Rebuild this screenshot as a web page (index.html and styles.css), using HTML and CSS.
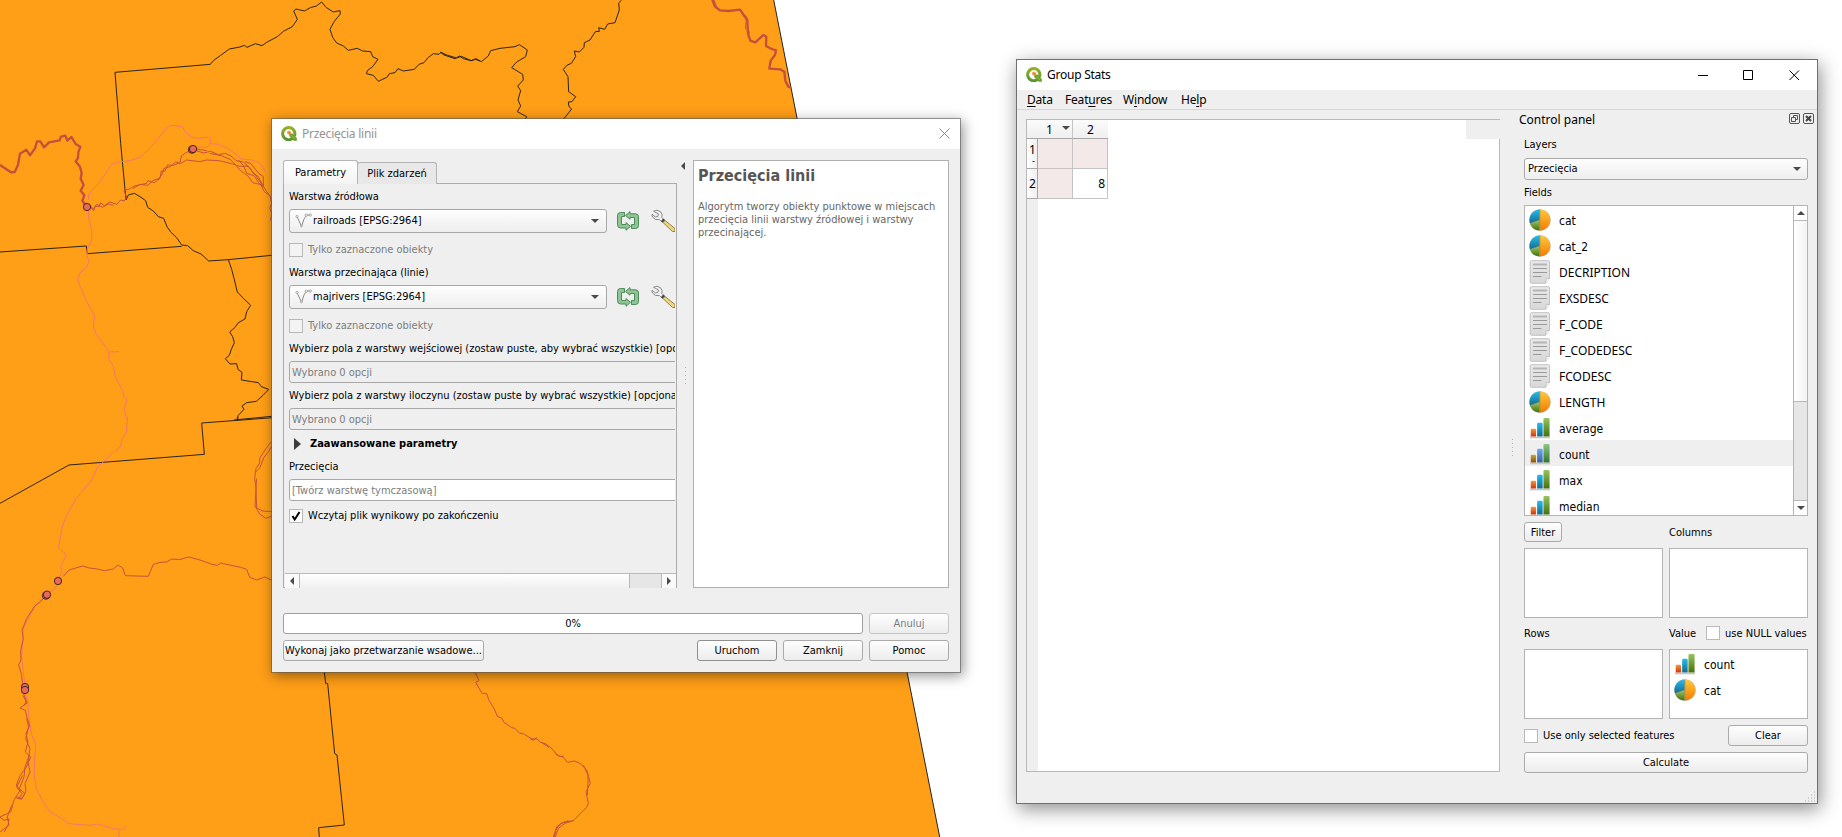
FILE: index.html
```html
<!DOCTYPE html>
<html lang="pl">
<head>
<meta charset="utf-8">
<title>QGIS</title>
<link rel="stylesheet" href="styles.css">
</head>
<body>
<svg class="defs" width="0" height="0" aria-hidden="true">
  <defs>
    <linearGradient id="gOrange" x1="0" y1="0" x2="0" y2="1"><stop offset="0" stop-color="#ffc83c"/><stop offset="1" stop-color="#f57c00"/></linearGradient>
    <linearGradient id="gBlue" x1="0" y1="0" x2="0" y2="1"><stop offset="0" stop-color="#25bdf0"/><stop offset="1" stop-color="#146a8c"/></linearGradient>
    <linearGradient id="gGreen" x1="0" y1="0" x2="0" y2="1"><stop offset="0" stop-color="#97c560"/><stop offset="1" stop-color="#45700d"/></linearGradient>
    <linearGradient id="gRed" x1="0" y1="0" x2="0" y2="1"><stop offset="0" stop-color="#f59a3c"/><stop offset="1" stop-color="#cc3311"/></linearGradient>
    <linearGradient id="gPage" x1="0" y1="0" x2="0" y2="1"><stop offset="0" stop-color="#e9e9e9"/><stop offset="1" stop-color="#d8d8d8"/></linearGradient>
    <linearGradient id="gLogo" x1="0" y1="0" x2="0" y2="1"><stop offset="0" stop-color="#93b023"/><stop offset="1" stop-color="#589632"/></linearGradient>
    <symbol id="logo" viewBox="0 0 16 16">
      <path d="M11.6 13.4A6.1 6.1 0 1 1 13.4 11" fill="none" stroke="url(#gLogo)" stroke-width="3"/>
      <path d="M8.2 8.4h3.2l4.4 4.6v2.8h-3L8.2 11z" fill="#6a9f2d"/>
      <path d="M10 9.8l4 4" stroke="#a9cc5c" stroke-width=".8"/>
      <circle cx="8" cy="7.6" r="2.1" fill="#f5a35a"/><circle cx="8.4" cy="8" r="1" fill="#ee7913"/>
    </symbol>
    <symbol id="pie" viewBox="0 0 22 22">
      <circle cx="11" cy="11" r="10.8" fill="#c9c4b4"/>
      <path d="M10.6 11V.6A10.4 10.4 0 0 0 1 14.4z" fill="url(#gBlue)"/>
      <path d="M10.6 11.4L1.2 14.9A10.4 10.4 0 0 0 10.6 21.4z" fill="url(#gGreen)"/>
      <path d="M11 .6a10.4 10.4 0 0 1 0 20.8z" fill="url(#gOrange)"/>
      <path d="M10.8.6v20.8M10.8 11L1 14.6" stroke="#8c8c50" stroke-width=".8"/>
    </symbol>
    <symbol id="page" viewBox="0 0 22 24">
      <path d="M2.5.7h17q1 0 1 1V18.500l-4 4.800h-14q-1.300 0-1.300-1.300V2Q1.200.7 2.500.7z" fill="url(#gPage)" stroke="#c2c2c2"/>
      <path d="M20.500 18.500h-3.200l-.8 4.800" fill="#fafafa" stroke="#c2c2c2"/>
      <path d="M4 4.500h14" stroke="#b4b4b4" stroke-width="2"/>
      <path d="M4 8.500h14M4 12.500h14M4 16.500h8.500" stroke="#9a9a9a"/>
    </symbol>
    <symbol id="bars" viewBox="0 0 22 23">
      <path d="M.5 21.500h21" stroke="#c4c4cc" stroke-width="1.600"/>
      <path d="M1.300 20.500v-7q0-1.300 1.300-1.300h3q1.300 0 1.300 1.300v7z" fill="url(#gRed)"/>
      <path d="M8 20.500V7.200Q8 6 9.200 6h3.400Q13.800 6 13.800 7.200V20.500z" fill="url(#gBlue)"/>
      <path d="M14.600 20.500V2.200Q14.600 1 15.800 1h4Q21 1 21 2.200V20.500z" fill="url(#gGreen)"/>
    </symbol>
    <symbol id="line" viewBox="0 0 17 16">
      <path d="M2 3.500L6.500 13.500L9 6L11.500 2.200L15 2" fill="none" stroke="#8c8c8c" stroke-width="1"/>
      <g fill="#f4f4f4" stroke="#9a9a9a" stroke-width=".8"><circle cx="2" cy="3.500" r="1.100"/><circle cx="6.500" cy="13" r=".9"/><circle cx="11.300" cy="2.200" r="1.200"/><circle cx="15.200" cy="2" r="1.200"/></g>
    </symbol>
    <symbol id="loop" viewBox="0 0 24 20">
      <g fill="#8fc594" stroke="#4b8c58" stroke-width="1" stroke-linejoin="round">
        <path d="M8.500 1.500H4.500Q1.500 1.500 1.500 4.500V13.500Q1.500 17 4.500 17H10V19.300L14.500 15.300L10 11.600V13.500H5.500V5.500H8.500z"/>
        <path d="M15.500 17.500H19.500Q22.500 17.500 22.500 14.500V6Q22.500 2.800 19.500 2.800H14V.6L9.500 4.500L14 8.200V6.500H18.500V13.500H15.500z"/>
      </g>
    </symbol>
    <symbol id="wrench" viewBox="0 0 24 24">
      <path d="M2.500 2.300Q6-.2 9.600 2.800Q12 5.500 10.800 8.500L13.300 11L11 13L8.400 10.600Q4 11.600 1.500 8Q.8 6.500 1 5.300L4.500 8L7 7.200L7.300 4.800z" fill="#f0f0f0" stroke="#8a8a8a"/>
      <path d="M10.800 12.800L13.300 10.500" stroke="#444" stroke-width="2.500"/>
      <path d="M12 13.500L14 11.500L24 19.500V22.500L21.500 22.500z" fill="#ecd681" stroke="#8b7a3c" stroke-width=".9"/>
    </symbol>
  </defs>
</svg>

<svg class="map" viewBox="0 0 1842 837" width="1842" height="837">
  <path d="M0 0H773.700L797 118L907 672L939.700 837H0z" fill="#ff9e17"/>
  <path d="M773.700 0L797 118L907 672L939.700 837" class="edge"/>
  <g transform="scale(.33333)">
    <path class="border" d="M378 600L362 430L345 217L631 193L640 182L662 166L688 147L720 141L733 136L741 142L766 131L786 137L800 127L832 110L850 94L877 80L892 58L881 33L888 27L913 33L931 23L949 18L965 6L978 22L1000 36L1020 32L1021 42L1003 64L990 88L998 112L1010 129L1030 138L1045 151L1072 145L1088 153L1112 155L1118 170L1134 178L1118 200L1103 211L1099 221L1120 226L1135 244L1162 231L1168 221L1185 218L1194 206L1210 213L1243 208L1257 193L1272 188L1285 172L1300 161L1317 163L1323 157L1340 165L1370 174L1384 169L1414 182L1426 178L1440 183"/>
    <path class="border" d="M378 600L385 585L403 580L420 590L437 602L443 622L460 633L475 650L491 655L501 680L513 697L530 713L545 735L563 737L580 752L603 762L626 783L685 779L815 766M685 779L695 808L702 835L712 876L730 895L752 916L740 935L735 957L715 968L705 982L689 996L698 1010L703 1028L694 1048L688 1066L676 1076L690 1092L710 1091L714 1108L726 1117L724 1140L775 1148L784 1160L806 1168L790 1185L769 1204L740 1208L726 1218L732 1228L714 1247L713 1262M0 756L259 738L262 761L545 739"/>
    <path class="border" d="M702 1260L815 1249"/>
    <path class="rail" d="M265 600L266 584L280 566L300 546L318 519L333 495L350 487L390 482L420 472L445 450L470 422L495 390L508 379L520 376L547 380L556 395L575 412L595 415L625 411L632 418L630 431L655 433L680 444L705 460L723 477L755 480L777 487L790 503L796 516M590 441L620 442L630 433M265 625L266 655L275 690L275 720L262 746L261 768L268 785L256 806L242 816L233 838L240 858L262 908L284 948L280 978L287 1000L328 1056L357 1055M328 1056L326 1076L340 1098L346 1130L368 1172L372 1190L381 1198L372 1230L383 1260"/>
    <path class="river thick" d="M0 495L18 507L33 517L44 516L54 495L60 461L79 449L90 466L105 445L111 424L121 424L132 442L147 427L179 421L183 410L196 407L202 422L214 411L228 433L241 440L235 457L234 474L227 484L240 500L245 520L242 536L251 555L242 572L253 586L247 602L258 618"/>
    <path class="river" d="M261 621L275 624L281 632L286 618L298 620L301 608L313 617L330 606L350 613L362 600L373 603L380 592L372 572L390 566L403 558L440 550L444 542L463 548L480 535L484 513L494 514L503 495L520 496L540 488L544 468L557 459L578 448M398 566L420 553L443 556L460 541L474 537L485 526L492 505L511 500L527 486L542 490L560 480L600 485L620 480L657 482L675 486L706 494L722 512L745 529L758 548L783 554L792 574L810 588L815 610M578 448L610 459L632 454L655 464L676 460L696 470L708 482L730 486L748 502L760 520L775 530L786 552L800 575L812 590M630 460L664 467L690 478L710 497L732 500L740 520L762 527L775 547L788 562M715 480L730 497L745 500L764 522L780 545L788 558M735 485L752 490L776 520L790 530L790 560M272 618L280 628L290 613L308 622L325 612L340 616M590 447L620 452M820 600L809 625L816 640L811 662"/>
    <g class="pt"><circle cx="261" cy="621" r="11"/><circle cx="576" cy="449" r="11"/><circle cx="579" cy="447" r="11"/></g>
  </g>
  <g transform="translate(0 417) scale(.33333)">
    <path class="border" d="M0 259L207 144L613 112L605 18L820 2M712 0V9M973 766L977 799L983 800L1004 1010L1011 1014L1033 1224L956 1232L958 1262"/>
    <path class="rail" d="M383 0L379 48L366 65L362 88L330 115L292 152L274 192L230 242L200 295L188 325L175 392L199 413L182 449L187 463L174 492M172 503L160 518L139 535L107 566L87 600L70 636L68 670L65 720L70 765L75 805M75 820L84 860L88 910L94 950L108 985L104 1020L103 1075L109 1115L130 1155L150 1185L184 1204L205 1220L270 1225L294 1221L343 1236L370 1237L379 1227M357 1238V1260"/>
    <path class="river" d="M190 478L207 459L248 447L268 453L292 456L314 461L340 456L354 444L368 453L376 476L445 478L460 442L480 436L499 435L515 426L538 428L566 420L600 429L636 442L652 445L662 438L688 444L722 451L740 457L749 481L770 489L794 480L817 490M815 73L798 95L780 122L778 140L768 154L764 185L768 210L765 270L788 282L815 284M815 88L805 105L792 121L779 153L767 165M770 185L768 210L770 275L778 290L797 304L815 298M139 535L120 555L105 566L80 605L66 640L70 665L62 700L63 728L56 745L64 770L68 800M70 828L78 850L75 862L60 873L76 880L82 905L89 925L78 950L84 975L76 1005L92 1020L78 1052L60 1076L49 1104L60 1120L42 1150L32 1185L0 1200M80 905L86 930L77 965L90 995L84 1035L90 1065L75 1100L78 1122L65 1147L48 1142M68 1075L50 1110L66 1130L57 1145M88 1015L75 1050L72 1080L58 1115L75 1130L64 1145L53 1140M0 1200L12 1210L27 1206L25 1222L13 1245M35 1165L22 1200L27 1225L0 1245M68 835L82 858L70 866"/>
    <g class="pt"><circle cx="174" cy="492" r="11"/><circle cx="138" cy="536" r="11"/><circle cx="141" cy="533" r="11"/><circle cx="75" cy="810" r="11"/><circle cx="75" cy="819" r="11"/></g>
  </g>
  <g transform="translate(440 0) scale(.33333)">
    <path class="border" d="M0 156L12 165L45 176L58 168L70 176L93 182L108 176L124 185L145 168L152 152L180 145L225 140L238 134L262 150L257 170L230 186L215 203L248 223L250 240L233 258L242 272L234 300L242 318L232 335L260 350L256 357M545 0L536 9L538 30L525 68L503 72L494 88L476 83L478 94L466 95L450 120L433 128L432 142L418 156L403 153L407 170L394 190L382 195L370 208L384 230L386 275L407 290L396 305L385 306L387 320L395 327L371 357"/>
    <path class="river thick" d="M817 0L825 20L840 31L865 33L900 29L911 45L922 60L924 100L931 122L946 127L970 105L979 110L978 138L995 147L1008 151L1005 165L992 182L988 206L1020 208L1033 215L1036 242L1045 260L1053 263"/>
    <path class="river" d="M822 0L832 25M907 42L920 50L916 85L928 95L924 112"/>
  </g>
  <g transform="translate(440 660) scale(.33333)">
    <path class="river" d="M105 36L117 62L107 67L126 100L140 101L147 121L162 145L172 169L185 174L192 187L215 203L225 205L238 219L250 221L274 236L292 237L300 246L318 252L340 270L350 285L370 292L382 307L403 303L420 310L440 330L446 350L451 370L438 395L445 430L439 443L400 482L370 487L350 500L340 531M270 236L280 241L290 233M305 248L327 262M348 281L360 290L371 288M430 315L444 345L444 370L442 405M400 482L375 490L355 505L346 531M385 482L360 492L348 510L343 531"/>
  </g>
</svg>

<section class="window dialog">
  <header class="titlebar dialog-title">
    <svg class="logo"><use href="#logo"/></svg><span class="grow">Przecięcia linii</span>
    <svg class="win-x" viewBox="0 0 11 11"><path d="M.5.5l10 10M10.500.5l-10 10"/></svg>
  </header>
  <div class="dialog-main">
    <div class="tabs">
      <div class="tabbar"><div class="tab active">Parametry</div><div class="tab"><span>Plik zdarzeń</span></div></div>
      <div class="frame">
        <div class="form">
          <div class="lbl">Warstwa źródłowa</div>
          <div class="layer-row">
            <div class="combo"><svg class="i-line"><use href="#line"/></svg><span class="grow">railroads [EPSG:2964]</span><i class="tri-down"></i></div>
            <svg class="i-loop"><use href="#loop"/></svg><svg class="i-wrench"><use href="#wrench"/></svg>
          </div>
          <div class="check off"><i class="box"></i><span>Tylko zaznaczone obiekty</span></div>
          <div class="lbl second">Warstwa przecinająca (linie)</div>
          <div class="layer-row">
            <div class="combo"><svg class="i-line"><use href="#line"/></svg><span class="grow">majrivers [EPSG:2964]</span><i class="tri-down"></i></div>
            <svg class="i-loop"><use href="#loop"/></svg><svg class="i-wrench"><use href="#wrench"/></svg>
          </div>
          <div class="check off"><i class="box"></i><span>Tylko zaznaczone obiekty</span></div>
          <div class="lbl third"><span class="t1">Wybierz pola z warstwy wejściowej (zostaw puste, aby wybrać wszystkie) [opcjonalne]</span></div>
          <div class="input off">Wybrano 0 opcji</div>
          <div class="lbl fourth"><span class="t2">Wybierz pola z warstwy iloczynu (zostaw puste by wybrać wszystkie) [opcjonalne]</span></div>
          <div class="input off">Wybrano 0 opcji</div>
          <div class="adv"><i class="tri-right"></i><b>Zaawansowane parametry</b></div>
          <div class="lbl fifth">Przecięcia</div>
          <div class="input">[Twórz warstwę tymczasową]</div>
          <div class="check last"><i class="box"><svg viewBox="0 0 12 12"><path d="M2.500 6l2.200 3.500L9.500 2"/></svg></i><span>Wczytaj plik wynikowy po zakończeniu</span></div>
        </div>
        <div class="hscroll"><i class="arrow l"></i><i class="thumb"></i><i class="track"></i><i class="arrow r"></i></div>
      </div>
    </div>
    <div class="splitter"><i class="tri-left"></i><i class="dots"></i></div>
    <div class="help"><h1>Przecięcia linii</h1><p><span>Algorytm tworzy obiekty punktowe w miejscach</span><br><span>przecięcia linii warstwy źródłowej i warstwy</span><br><span>przecinającej.</span></p></div>
  </div>
  <div class="dialog-row progress-row"><div class="progress">0%</div><div class="btn off">Anuluj</div></div>
  <div class="dialog-row"><div class="btn batch">Wykonaj jako przetwarzanie wsadowe...</div><div class="grow"></div><div class="btn default">Uruchom</div><div class="btn">Zamknij</div><div class="btn">Pomoc</div></div>
</section>

<section class="window stats">
  <header class="titlebar">
    <svg class="logo"><use href="#logo"/></svg><span class="grow">Group Stats</span>
    <svg class="win-btns" viewBox="0 0 102 12"><path d="M0 6.500h10M45.500 1.500h9v9h-9zM91.500 1.500l9.500 9.500M101 1.500l-9.500 9.500"/></svg>
  </header>
  <nav class="menu"><span class="m1"><u>D</u>ata</span><span class="m2">Feat<u>u</u>res</span><span class="m3">W<u>i</u>ndow</span><span class="m4">He<u>l</u>p</span></nav>
  <div class="stats-main">
    <div class="table">
      <div class="corner"></div><div class="th c1"><span>1</span><i class="tri-down"></i></div><div class="th c2">2</div>
      <div class="rh">1<small>-</small></div><div class="td pink"></div><div class="td pink c2"></div>
      <div class="rh two">2</div><div class="td pink"></div><div class="td c2">8</div>
      <div class="rest"></div>
    </div>
    <div class="splitter2"><i class="dots"></i></div>
    <aside class="panel">
      <div class="panel-title"><span class="grow">Control panel</span>
        <svg viewBox="0 0 25 11"><g fill="none" stroke="#555"><rect x=".5" y=".5" width="10" height="10" rx="1.500"/><rect x="14.500" y=".5" width="10" height="10" rx="1.500"/><path d="M2.500 4.500h4v4h-4zM4.500 4V2.500h4v4H7"/></g><path d="M17 3l5 5M22 3l-5 5" stroke="#444" stroke-width="2"/></svg>
      </div>
      <div class="plabel">Layers</div>
      <div class="combo small"><span class="grow">Przecięcia</span><i class="tri-down"></i></div>
      <div class="plabel">Fields</div>
      <div class="list">
        <ul class="items">
          <li><svg><use href="#pie"/></svg>cat</li>
          <li><svg><use href="#pie"/></svg>cat_2</li>
          <li class="up"><svg class="pg"><use href="#page"/></svg>DECRIPTION</li>
          <li class="up"><svg class="pg"><use href="#page"/></svg>EXSDESC</li>
          <li class="up"><svg class="pg"><use href="#page"/></svg>F_CODE</li>
          <li class="up"><svg class="pg"><use href="#page"/></svg>F_CODEDESC</li>
          <li class="up"><svg class="pg"><use href="#page"/></svg>FCODESC</li>
          <li class="up"><svg><use href="#pie"/></svg>LENGTH</li>
          <li><svg><use href="#bars"/></svg>average</li>
          <li class="sel"><svg><use href="#bars"/></svg>count</li>
          <li><svg><use href="#bars"/></svg>max</li>
          <li><svg><use href="#bars"/></svg>median</li>
        </ul>
        <div class="vscroll"><i class="arrow u"></i><i class="thumb"></i><i class="track"></i><i class="arrow d"></i></div>
      </div>
      <div class="pair head1"><div><div class="btn filter">Filter</div></div><div>Columns</div></div>
      <div class="pair"><div class="drop"></div><div class="drop"></div></div>
      <div class="pair head2"><div>Rows</div><div class="val"><span>Value</span><i class="box"></i><span class="nul">use NULL values</span></div></div>
      <div class="pair"><div class="drop"></div><ul class="drop items"><li><svg><use href="#bars"/></svg>count</li><li><svg><use href="#pie"/></svg>cat</li></ul></div>
      <div class="only"><i class="box"></i><span class="grow">Use only selected features</span><div class="btn">Clear</div></div>
      <div class="btn calc">Calculate</div>
    </aside>
  </div>
  <svg class="grip" viewBox="0 0 11 11"><path d="M9 1h1M6 4h1M9 4h1M3 7h1M6 7h1M9 7h1M0 10h1M3 10h1M6 10h1M9 10h1"/></svg>
</section>
</body>
</html>
```
FILE: styles.css
```css
* { box-sizing: border-box; }
body {
  margin: 0; width: 1842px; height: 837px; overflow: hidden; position: relative; background: #fff;
  font: 11px/14px "DejaVu Sans Condensed", "Noto Sans", sans-serif; color: #000; white-space: nowrap;
}
i { display: block; font-style: normal; flex: none; }
svg { display: block; flex: none; }
.defs { position: absolute; }
.grow { flex: 1; }
ul { margin: 0; padding: 0; list-style: none; }

/* map canvas */
.map { position: absolute; left: 0; top: 0; }
.map path { fill: none; stroke-linejoin: round; }
.map > path:first-child { fill: #ff9e17; }
.edge { stroke: #232323; stroke-width: 1; }
.border { stroke: #2b241c; stroke-width: 3; }
.rail { stroke: #f8736a; stroke-width: 3; }
.river { stroke: #c4523c; stroke-width: 3; }
.river.thick { stroke-width: 7; stroke: #c4503c; }
.pt circle { fill: #e8695c; stroke: #2b1c1c; stroke-width: 2.6; }

/* windows */
.window { position: absolute; display: flex; flex-direction: column; background: #efefef; }
.dialog { left: 271px; top: 118px; width: 690px; height: 555px; border: 1px solid rgba(90,90,90,.6); background-clip: padding-box; box-shadow: 2px 3px 12px rgba(0,0,0,.42); }
.stats { left: 1016px; top: 59px; width: 802px; height: 745px; border: 1px solid #707070; box-shadow: 2px 5px 18px rgba(0,0,0,.45); }
.titlebar { height: 30px; flex: none; display: flex; align-items: center; gap: 5px; padding: 0 17px 0 9px; background: #fff; font: 12px/16px "Noto Sans", sans-serif; letter-spacing: -.25px; }
.dialog-title { color: #949494; padding-right: 10px; }
.logo { width: 16px; height: 16px; margin-top: -2px; }
.win-x { width: 11px; height: 11px; margin-top: -2px; fill: none; stroke: #888; }
.win-btns { width: 102px; height: 12px; margin-top: -1px; fill: none; stroke: #000; }

/* dialog */
.dialog-main { display: flex; height: 440px; padding: 11px 11px 0; flex: none; }
.tabs { width: 394px; }
.tabbar { display: flex; align-items: flex-end; height: 24px; margin-bottom: -1px; position: relative; }
.tab { border: 1px solid #b4b4b4; border-bottom: 0; border-radius: 3px 3px 0 0; height: 22px; width: 80px; margin-left: -1px; padding: 4px 0 0; text-align: center; background: #e8e8e8; }
.tab.active { background: linear-gradient(#fff, #f4f4f4); width: 75px; height: 24px; margin-left: 0; padding-top: 5px; }
.frame { border: 1px solid #acacac; height: 405px; padding: 1px; width: 394px; }
.form { width: 390px; height: 388px; overflow: hidden; padding: 5px 0 0 4px; }
.lbl { height: 14px; }
.lbl.second { margin-top: 9px; }
.lbl.third { margin-top: 9px; }
.lbl.fourth { margin-top: 6px; }
.layer-row { display: flex; align-items: center; margin-top: 5px; height: 24px; }
.combo { display: flex; align-items: center; width: 318px; height: 24px; border: 1px solid #a8a8a8; border-radius: 3px; background: linear-gradient(#fefefe, #eee); padding: 0 7px 0 5px; }
.i-line { width: 17px; height: 16px; margin-right: 1px; }
.i-loop { width: 24px; height: 20px; margin-left: 9px; }
.i-wrench { width: 24px; height: 24px; margin-left: 11px; }
.tri-down { border: 4px solid transparent; border-top: 4px solid #4a4a4a; border-bottom: 0; }
.check { display: flex; gap: 5px; align-items: center; height: 14px; margin-top: 10px; }
.box { width: 14px; height: 14px; border: 1px solid #b9b9b9; background: #fff; }
.box svg { width: 12px; height: 12px; fill: none; stroke: #000; stroke-width: 2; }
.off { color: #7d7d7d; }
.off .box { background: #f3f3f3; }
.input { height: 22px; width: 420px; border: 1px solid #a8a8a8; border-radius: 3px; background: #fff; padding: 4px 2px 0; margin-top: 5px; color: #7d7d7d; }
.input.off { background: #efefef; }
.adv { display: flex; align-items: center; height: 14px; margin-top: 7px; padding-left: 5px; gap: 9px; }
.tri-right { border: 6px solid transparent; border-left: 7px solid #3c3c3c; border-right: 0; }
.lbl.fifth { margin-top: 9px; }
.check.last { margin-top: 8px; }
.hscroll { display: flex; height: 15px; width: 391px; border-top: 1px solid #b9b9b9; background: #fafafa; }
.hscroll .arrow { width: 14px; display: flex; align-items: center; justify-content: center; }
.arrow::before { content: ""; border: 4px solid transparent; }
.arrow.l::before { border-right-color: #4a4a4a; border-left: 0; }
.arrow.r::before { border-left-color: #4a4a4a; border-right: 0; }
.hscroll .thumb { width: 331px; border: 1px solid #b9b9b9; border-width: 0 1px; background: linear-gradient(#fff, #f0f0f0); }
.hscroll .track { flex: 1; background: #e6e6e6; border-right: 1px solid #b9b9b9; }
.splitter { width: 16px; padding: 2px 0 0 4px; }
.tri-left { width: 4px; border: 4px solid transparent; border-right: 4px solid #4a4a4a; border-left: 0; }
.dots { width: 1px; height: 17px; background: repeating-linear-gradient(#b0b0b0 0 1px, transparent 1px 4px); }
.splitter .dots { margin: 197px 0 0 4px; }
.help { flex: 1; height: 428px; border: 1px solid #b0b0b0; background: #fff; padding: 4px; color: #666; }
.help h1 { font: bold 16px/22px "DejaVu Sans Condensed", "Noto Sans", sans-serif; color: #555; margin: 0 0 13px; }
.help p { margin: 0; line-height: 13px; }
.dialog-row { display: flex; gap: 6px; padding: 0 11px; height: 21px; flex: none; }
.progress-row { margin: 24px 0 6px; }
.progress { flex: 1; background: #fff; border: 1px solid #a0a0a0; border-radius: 3px; text-align: center; line-height: 20px; }
.btn { width: 80px; height: 21px; border: 1px solid #aaa; border-radius: 3px; background: linear-gradient(#fefefe, #ececec); text-align: center; line-height: 20px; }
.btn.off { border-color: #c4c4c4; }
.btn.default { border-color: #909090; }
.btn.batch { width: 201px; }

/* group stats */
.menu { display: flex; height: 20px; flex: none; border-bottom: 1px solid #d6d6d6; padding-left: 10px; font: 12px/19px "Noto Sans", sans-serif; letter-spacing: -.2px; }
.menu u { text-underline-offset: 2px; }
.m1 { width: 38px; } .m2 { width: 58px; } .m3 { width: 58px; }
.stats-main { display: flex; height: 663px; flex: none; }
.table { width: 474px; height: 653px; margin: 9px 0 0 9px; border: 1px solid #b9b9b9; background: linear-gradient(90deg, #efefef 11px, #fff 11px); display: grid; grid-template-columns: 11px 35px 35px 1fr; grid-template-rows: 19px 30px 30px 1fr; position: relative; font: 12px/16px "Noto Sans", sans-serif; }
.corner { background: linear-gradient(#fbfbfb, #efefef); border-bottom: 1px solid #a8a8a8; }
.th { background: linear-gradient(#fbfbfb, #efefef); border-bottom: 1px solid #a8a8a8; border-right: 1px solid #c4c4c4; text-align: center; line-height: 19px; }
.th.c1 { display: flex; align-items: center; gap: 9px; padding-left: 8px; }
.th.c1 .tri-down { margin-top: -3px; }
.th.c2 { border-right: 0; box-shadow: 393px 0 0 #efefef; grid-column: 3; }
.rh { grid-column: 1; border-right: 1px solid #a8a8a8; border-bottom: 1px solid #a8a8a8; background: linear-gradient(90deg, #fff, #efefef); padding: 3px 0 0 2px; }
.rh small { display: block; font-size: 9px; line-height: 6px; padding-left: 3px; }
.rh.two { padding-top: 7px; }
.td { border-right: 1px solid #c4c4c4; border-bottom: 1px solid #c4c4c4; text-align: right; padding: 7px 2px 0; }
.pink { background: #f4e9e9; }
.splitter2 { width: 19px; padding: 329px 0 0 12px; }
.panel { width: 297px; padding-right: 9px; padding-left: 5px; }
.panel-title { display: flex; align-items: center; height: 20px; margin: 0 -7px 0 -5px; font: 12px/16px "Noto Sans", sans-serif; }
.panel-title svg { width: 25px; height: 11px; margin-top: -3px; }
.plabel { height: 14px; margin: 8px 0 6px; }
.plabel + .combo { width: 284px; height: 22px; padding: 0 6px 0 3px; }
.combo.small + .plabel { margin: 6px 0 5px; }
.list { width: 284px; height: 311px; border: 1px solid #b4b4b4; background: #fff; display: flex; overflow: hidden; }
.items { flex: 1; font-size: 12px; }
.items li { display: flex; align-items: center; height: 26px; gap: 8px; padding: 3px 0 0 4px; }
.items svg { width: 22px; height: 22px; margin-top: -2px; }
.items svg.pg { width: 22px; height: 24px; }
.up { font-family: "Noto Sans", sans-serif; }
.sel { background: #efefef; }
.sel svg { filter: sepia(.1) hue-rotate(25deg) saturate(.8); }
.vscroll { width: 14px; border-left: 1px solid #b4b4b4; display: flex; flex-direction: column; }
.vscroll .arrow { height: 14px; display: flex; justify-content: center; align-items: center; }
.arrow.u::before { border-bottom-color: #4a4a4a; border-top: 0; }
.arrow.d::before { border-top-color: #4a4a4a; border-bottom: 0; }
.vscroll .thumb { height: 182px; border: 1px solid #b9b9b9; border-width: 1px 0; background: linear-gradient(90deg, #fff, #f4f4f4); }
.vscroll .track { flex: 1; background: #e6e6e6; border-bottom: 1px solid #b9b9b9; }
.pair { display: grid; grid-template-columns: 139px 139px; gap: 6px; width: 284px; }
.head1 { height: 20px; margin: 6px 0; line-height: 22px; }
.btn.filter { width: 38px; height: 20px; line-height: 20px; }
.drop { height: 70px; border: 1px solid #b4b4b4; background: #fff; }
.head2 { height: 31px; padding-top: 8px; line-height: 16px; }
.val { display: flex; gap: 5px; }
.val .box { margin-left: 5px; }
.only { display: flex; align-items: center; gap: 5px; width: 284px; height: 21px; margin: 6px 0; }
.btn.calc { width: 284px; }
.grip { position: absolute; right: 1px; bottom: 1px; width: 11px; height: 11px; stroke: #b0b0b0; }
```
